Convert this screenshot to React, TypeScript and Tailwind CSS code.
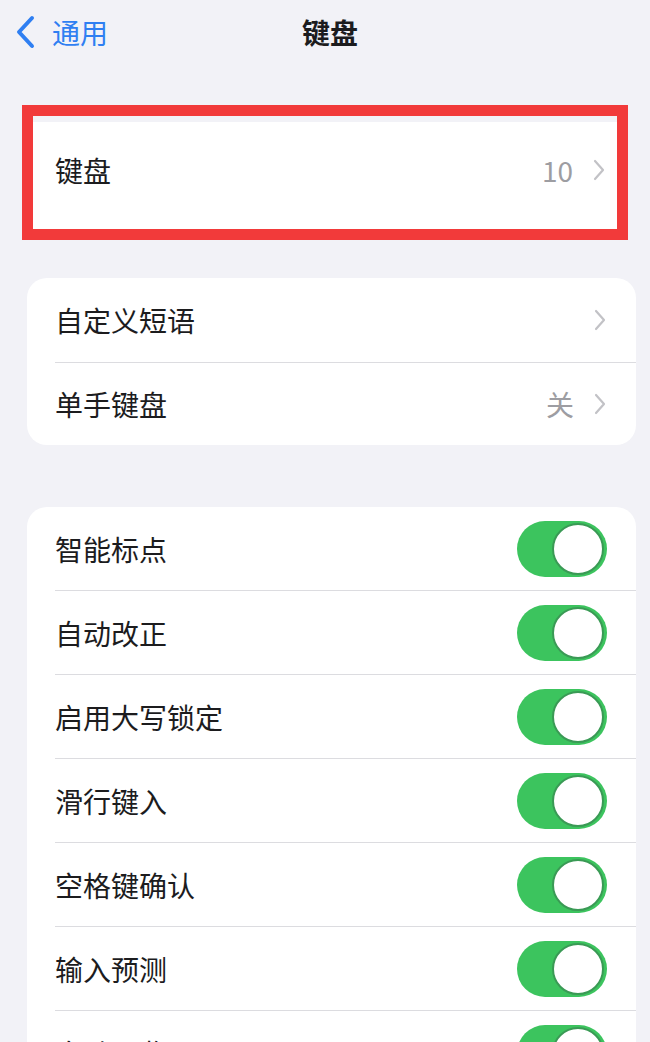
// iOS Settings - Keyboard page

const font = { fontFamily: '"Noto Sans CJK SC", "Noto Sans", sans-serif' };

function Chevron() {
  return (
    <svg width="12" height="22" viewBox="0 0 12 22" fill="none">
      <path d="M2 2l8 9-8 9" stroke="#c2c2c6" strokeWidth="2.2" strokeLinecap="round" strokeLinejoin="round" />
    </svg>
  );
}

function Toggle() {
  return (
    <div className="flex h-[56px] w-[90px] items-center justify-end rounded-full bg-[#3cc45e] p-[3px]">
      <div className="h-[52px] w-[52px] rounded-full border-2 border-[#3a9a55] bg-white" />
    </div>
  );
}

const toggles = ['智能标点', '自动改正', '启用大写锁定', '滑行键入', '空格键确认', '输入预测', '自动预览'];

export default function App() {
  return (
    <div className="h-[1042px] w-[650px] overflow-hidden bg-[#f2f2f7] text-[#1c1c1e]" style={font}>
      {/* nav bar */}
      <div className="relative flex h-[64px] items-center">
        <div className="flex items-center pl-[14px] text-[#2f7ff2]">
          <svg width="22" height="34" viewBox="0 0 22 34" fill="none">
            <path d="M18 3L5 17l13 14" stroke="#2f7ff2" strokeWidth="4" strokeLinecap="round" strokeLinejoin="round" />
          </svg>
          <span className="ml-[16px] text-[28px] leading-none">通用</span>
        </div>
        <div className="absolute left-0 right-0 top-0 flex h-[64px] items-center justify-center pl-[10px] text-[28px] font-bold leading-none">
          键盘
        </div>
      </div>

      {/* highlighted keyboards row */}
      <div className="ml-[22px] mt-[41px] h-[135px] w-[606px] border-[11px] border-[#f23a3a] bg-white">
        <div className="h-[6px] bg-[#f2f2f7]" />
        <div className="flex h-[96px] items-center pl-[22px] pr-[12px]">
          <span className="flex-1 text-[28px]">键盘</span>
          <span className="mr-[20px] text-[28px] text-[#9d9da2]">10</span>
          <Chevron />
        </div>
      </div>

      {/* shortcuts card */}
      <div className="ml-[27px] mt-[38px] w-[609px] overflow-hidden rounded-[20px] bg-white">
        <div className="flex h-[84px] items-center pl-[28px] pr-[30px]">
          <span className="flex-1 text-[28px]">自定义短语</span>
          <Chevron />
        </div>
        <div className="ml-[28px] h-px bg-[#dcdce0]" />
        <div className="flex h-[82px] items-center pl-[28px] pr-[30px]">
          <span className="flex-1 text-[28px]">单手键盘</span>
          <span className="mr-[20px] text-[28px] text-[#9d9da2]">关</span>
          <Chevron />
        </div>
      </div>

      {/* toggles card */}
      <div className="ml-[27px] mt-[62px] w-[609px] rounded-[20px] bg-white">
        {toggles.map((t, i) => (
          <div key={t}>
            {i > 0 && <div className="ml-[28px] h-px bg-[#dcdce0]" />}
            <div className="flex h-[83px] items-center pl-[28px] pr-[29px]">
              <span className="flex-1 text-[28px]">{t}</span>
              <Toggle />
            </div>
          </div>
        ))}
      </div>
    </div>
  );
}
